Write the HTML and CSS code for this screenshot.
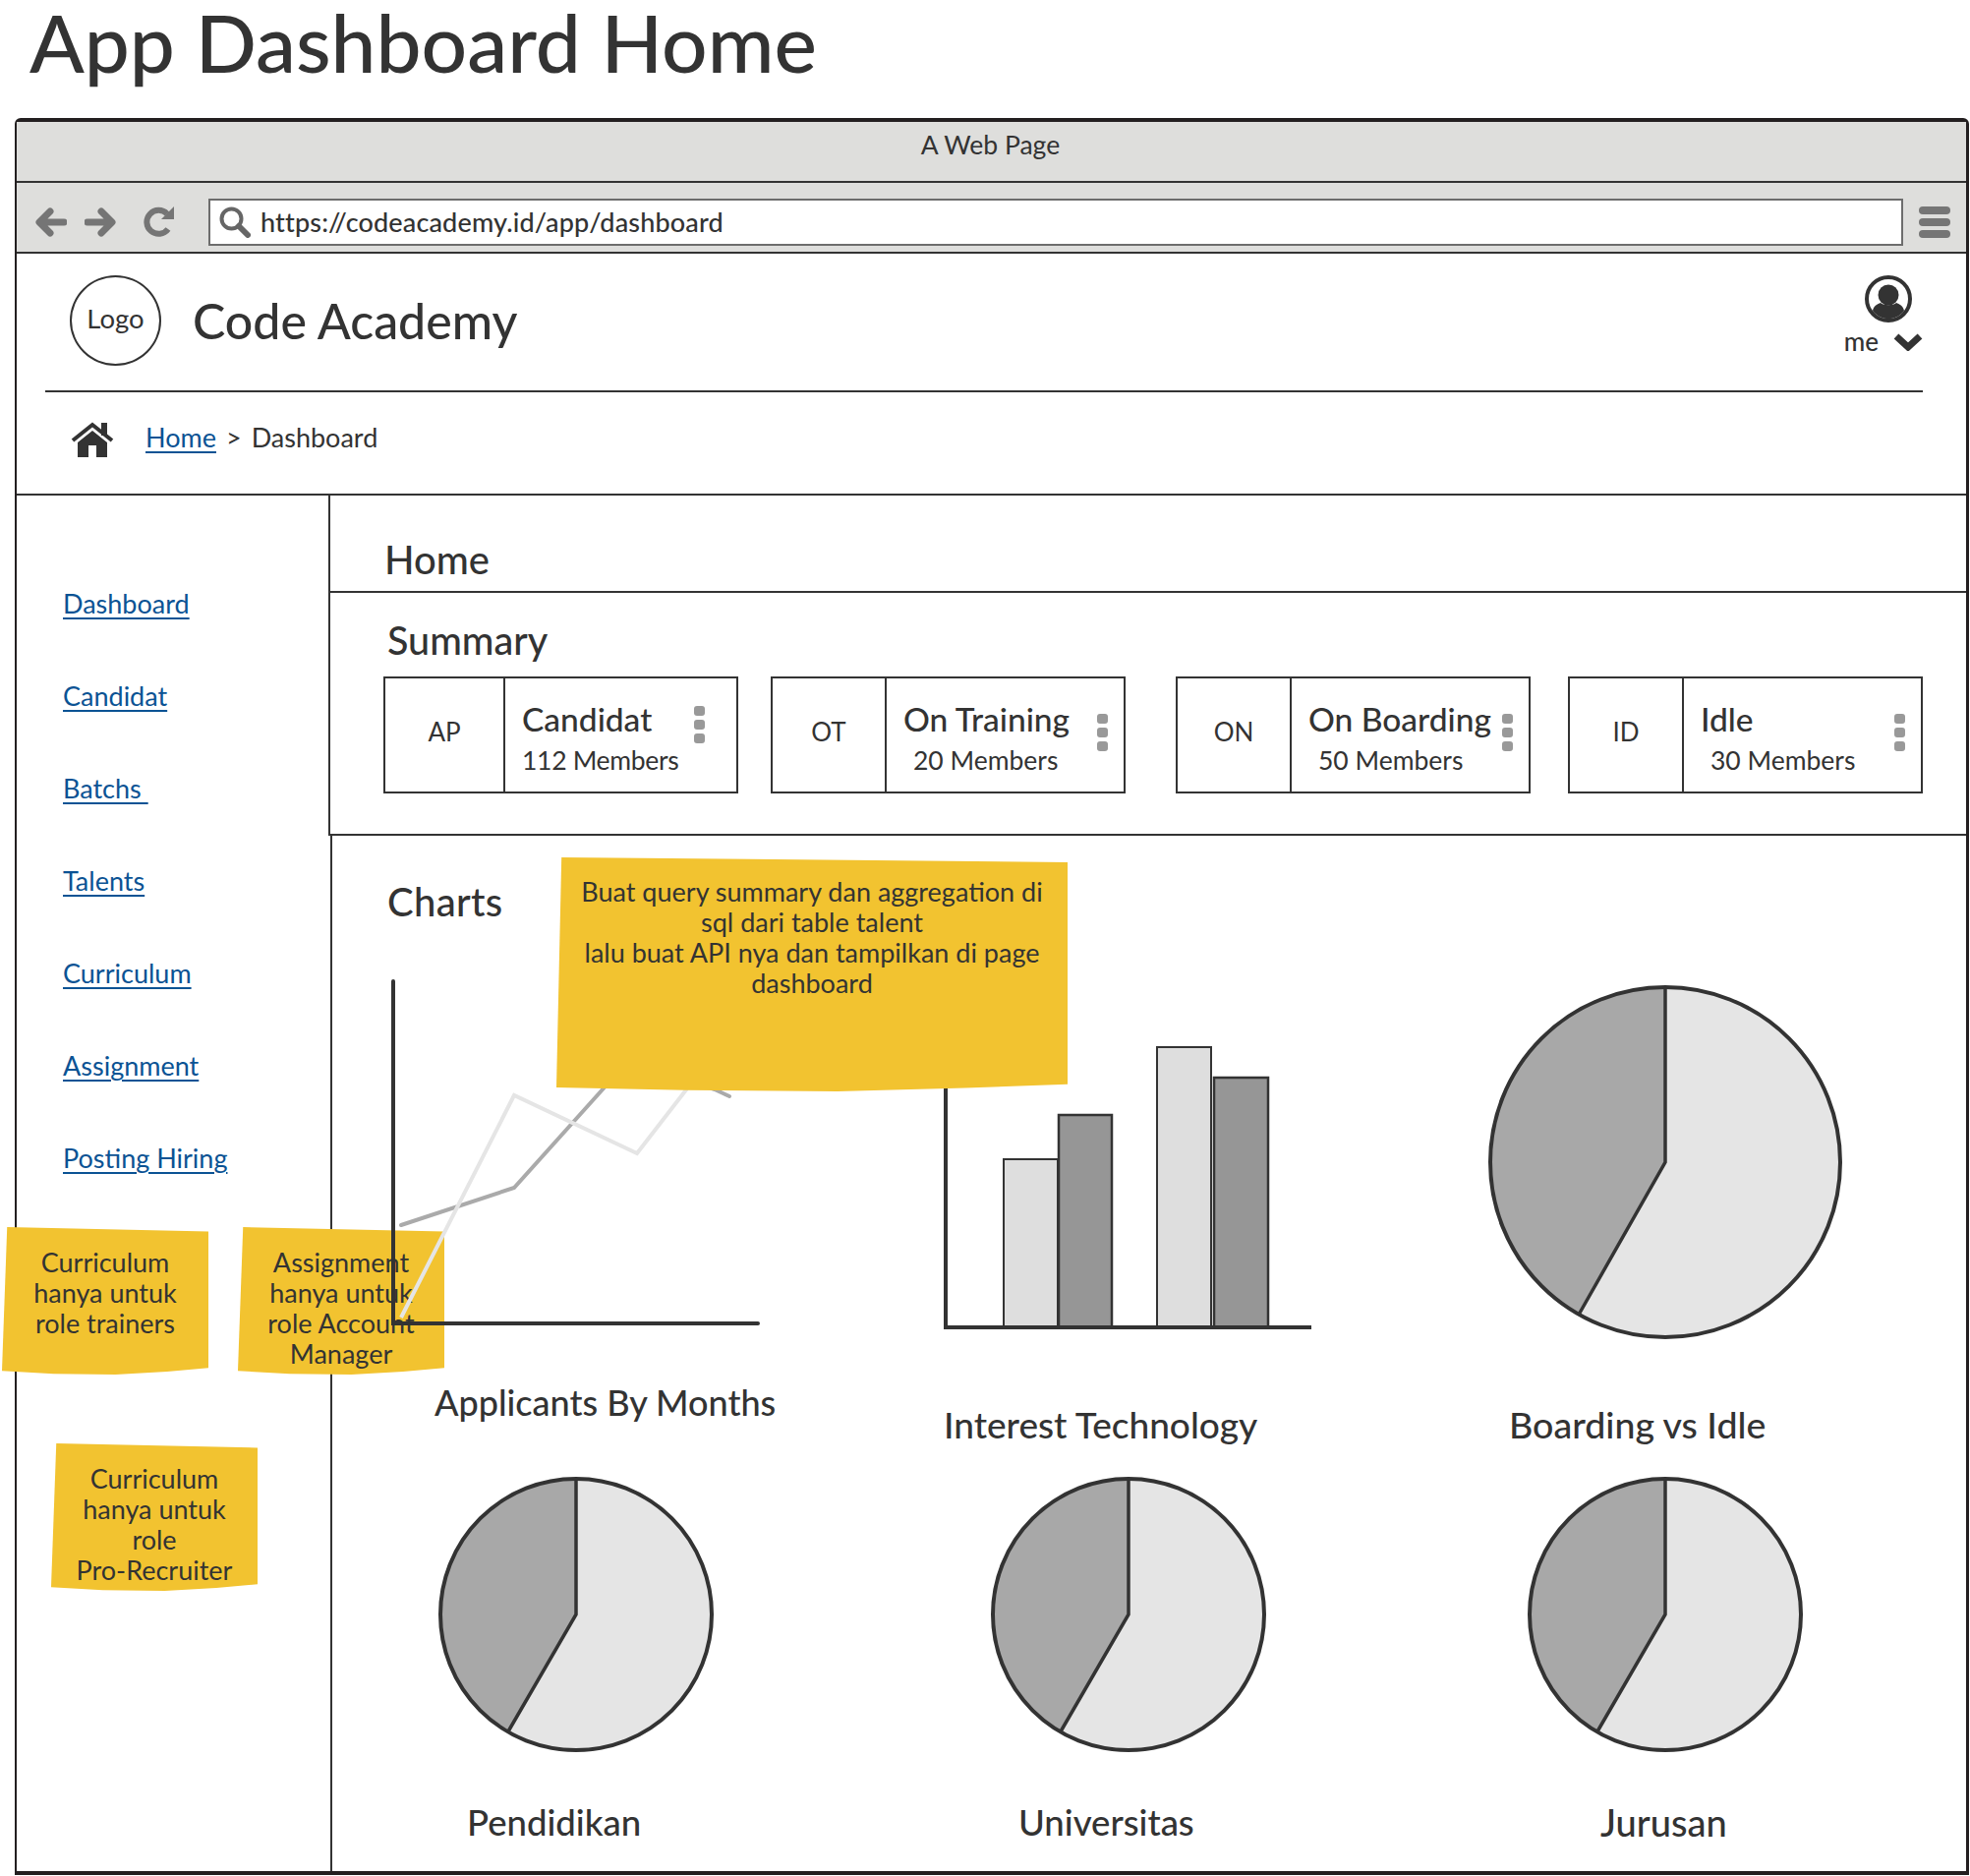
FILE: index.html
```html
<!DOCTYPE html>
<html lang="en">
<head>
<meta charset="utf-8">
<title>App Dashboard Home</title>
<link rel="stylesheet" href="styles.css">
</head>
<body>
<h1 class="page-title">App Dashboard Home</h1>
<div class="window">
  <div class="titlebar">A Web Page</div>
  <div class="toolbar">
    <svg class="tool-icon" width="32" height="32" viewBox="0 0 32 32"><path d="M29 16H5M15 5 4 16l11 11" fill="none" stroke="#757575" stroke-width="7" stroke-linecap="round" stroke-linejoin="round"/></svg>
    <svg class="tool-icon" width="32" height="32" viewBox="0 0 32 32"><path d="M3 16h24M17 5l11 11-11 11" fill="none" stroke="#757575" stroke-width="7" stroke-linecap="round" stroke-linejoin="round"/></svg>
    <svg class="tool-icon reload" width="32" height="32" viewBox="0 0 32 32"><path d="M25 23A12 12 0 1 1 24 7.5" fill="none" stroke="#757575" stroke-width="6"/><path d="M18 13h13V0z" fill="#757575"/></svg>
    <div class="urlbar">
      <svg class="search" width="32" height="32" viewBox="0 0 32 32"><circle cx="12.500" cy="12.500" r="10" fill="none" stroke="#666" stroke-width="4"/><path d="m20 20 9 9" stroke="#666" stroke-width="6" stroke-linecap="round"/></svg>
      <span class="url">https://codeacademy.id/app/dashboard</span>
    </div>
    <div class="hamburger"><i></i><i></i><i></i></div>
  </div>
  <header class="app-header">
    <div class="logo">Logo</div>
    <div class="brand">Code Academy</div>
    <div class="user">
      <svg class="avatar" width="48" height="48" viewBox="0 0 48 48"><circle cx="24" cy="24" r="22" fill="#fff" stroke="#333" stroke-width="4"/><circle cx="24" cy="20" r="10.500" fill="#333"/><path d="M8 36c1-5 5-7 8-8 3 3 13 3 16 0 3 1 7 3 8 8-8 11-24 11-32 0z" fill="#333"/></svg>
      <div class="user-row">
        <span class="me">me</span>
        <svg class="chevron" width="30" height="20" viewBox="0 0 30 20"><path d="m3 5 12 11L27 5" fill="none" stroke="#333" stroke-width="7"/></svg>
      </div>
    </div>
  </header>
  <nav class="crumbs">
    <svg class="home-icon" width="44" height="36" viewBox="0 0 44 36"><path d="M7 21 22 9l15 12v15H26V24h-8v12H7z" fill="#333"/><path d="M2 19 22 3l20 16" fill="none" stroke="#333" stroke-width="4"/><path d="M31 1h6v13h-6z" fill="#333"/></svg>
    <a class="link crumb-home" href="#">Home</a>
    <span class="crumb-sep">&gt;</span>
    <span class="crumb-current">Dashboard</span>
  </nav>
  <div class="content">
    <aside class="sidebar">
      <a class="link nav-link" href="#">Dashboard</a>
      <a class="link nav-link" href="#">Candidat</a>
      <a class="link nav-link" href="#">Batchs&nbsp;</a>
      <a class="link nav-link" href="#">Talents</a>
      <a class="link nav-link" href="#">Curriculum</a>
      <a class="link nav-link" href="#">Assignment</a>
      <a class="link nav-link" href="#">Posting Hiring</a>
    </aside>
    <main class="main">
      <section class="home"><h2 class="section-title">Home</h2></section>
      <section class="summary">
        <h2 class="section-title summary-title">Summary</h2>
        <div class="cards">
          <article class="card card-1">
            <div class="card-code code-wide">AP</div>
            <div class="card-body">
              <div class="card-text"><div class="card-name">Candidat</div><div class="card-count flush">112 Members</div></div>
              <div class="kebab kebab-1"><i></i><i></i><i></i></div>
            </div>
          </article>
          <article class="card card-2">
            <div class="card-code">OT</div>
            <div class="card-body">
              <div class="card-text"><div class="card-name">On Training</div><div class="card-count">20 Members</div></div>
              <div class="kebab"><i></i><i></i><i></i></div>
            </div>
          </article>
          <article class="card card-3">
            <div class="card-code">ON</div>
            <div class="card-body">
              <div class="card-text"><div class="card-name">On Boarding</div><div class="card-count">50 Members</div></div>
              <div class="kebab"><i></i><i></i><i></i></div>
            </div>
          </article>
          <article class="card card-4">
            <div class="card-code">ID</div>
            <div class="card-body">
              <div class="card-text"><div class="card-name">Idle</div><div class="card-count">30 Members</div></div>
              <div class="kebab"><i></i><i></i><i></i></div>
            </div>
          </article>
        </div>
      </section>
      <section class="charts">
        <h2 class="section-title charts-title">Charts</h2>
        <div class="chart-grid">
          <figure class="chart">
            <svg class="chart-svg line-svg" width="380" height="354" viewBox="396 996 380 354">
              <path d="M408 1246 523 1208 640 1078 727 1108 742 1115" fill="none" stroke="#aaa" stroke-width="4" stroke-linecap="round"/>
              <path d="M408 1340 523 1114 648 1173 720 1080" fill="none" stroke="#e5e5e5" stroke-width="4"/>
              <path d="M400 998V1346H771" fill="none" stroke="#333" stroke-width="4" stroke-linecap="round"/>
            </svg>
            <figcaption class="chart-label label-line">Applicants By Months</figcaption>
          </figure>
          <figure class="chart">
            <svg class="chart-svg bar-svg" width="380" height="354" viewBox="958 1000 380 354">
              <path d="M1021 1179h55v171h-55z" fill="#dedede" stroke="#333" stroke-width="2"/>
              <path d="M1077 1134h54v216h-54z" fill="#969696" stroke="#333" stroke-width="2.500"/>
              <path d="M1177 1065h55v285h-55z" fill="#dedede" stroke="#333" stroke-width="2"/>
              <path d="M1235 1096h55v254h-55z" fill="#969696" stroke="#333" stroke-width="2.500"/>
              <path d="M962 1060V1350H1334" fill="none" stroke="#333" stroke-width="4"/>
            </svg>
            <figcaption class="chart-label label-bar">Interest Technology</figcaption>
          </figure>
          <figure class="chart">
            <svg class="pie-big" width="364" height="364" viewBox="-182 -182 364 364">
              <circle r="178" fill="#e5e5e5"/>
              <path d="M0 0V-178A178 178 0 0 0 -88 155z" fill="#a8a8a8"/>
              <path d="M0-178V0L-88 155" fill="none" stroke="#333" stroke-width="3.500"/>
              <circle r="178" fill="none" stroke="#333" stroke-width="4"/>
            </svg>
            <figcaption class="chart-label label-pie">Boarding vs Idle</figcaption>
          </figure>
          <figure class="chart">
            <svg class="pie-small ps-1" width="284" height="284" viewBox="-142 -142 284 284">
              <circle r="138" fill="#e5e5e5"/>
              <path d="M0 0V-138A138 138 0 0 0 -69 119z" fill="#a8a8a8"/>
              <path d="M0-138V0L-69 119" fill="none" stroke="#333" stroke-width="3.500"/>
              <circle r="138" fill="none" stroke="#333" stroke-width="4"/>
            </svg>
            <figcaption class="chart-label small-label sl-1">Pendidikan</figcaption>
          </figure>
          <figure class="chart">
            <svg class="pie-small ps-2" width="284" height="284" viewBox="-142 -142 284 284">
              <circle r="138" fill="#e5e5e5"/>
              <path d="M0 0V-138A138 138 0 0 0 -69 119z" fill="#a8a8a8"/>
              <path d="M0-138V0L-69 119" fill="none" stroke="#333" stroke-width="3.500"/>
              <circle r="138" fill="none" stroke="#333" stroke-width="4"/>
            </svg>
            <figcaption class="chart-label small-label sl-2">Universitas</figcaption>
          </figure>
          <figure class="chart">
            <svg class="pie-small ps-3" width="284" height="284" viewBox="-142 -142 284 284">
              <circle r="138" fill="#e5e5e5"/>
              <path d="M0 0V-138A138 138 0 0 0 -69 119z" fill="#a8a8a8"/>
              <path d="M0-138V0L-69 119" fill="none" stroke="#333" stroke-width="3.500"/>
              <circle r="138" fill="none" stroke="#333" stroke-width="4"/>
            </svg>
            <figcaption class="chart-label small-label sl-3">Jurusan</figcaption>
          </figure>
        </div>
      </section>
    </main>
  </div>
</div>
<div class="sticky sticky-query">Buat query summary dan aggregation di<br>sql dari table talent<br>lalu buat API nya dan tampilkan di page<br>dashboard</div>
<div class="sticky sticky-trainers">Curriculum<br>hanya untuk<br>role trainers</div>
<div class="sticky sticky-account">Assignment<br>hanya untuk<br>role Account<br>Manager</div>
<div class="sticky sticky-recruiter">Curriculum<br>hanya untuk<br>role<br>Pro-Recruiter</div>
</body>
</html>
```
FILE: styles.css
```css
* { box-sizing: border-box; }
html, body { margin: 0; padding: 0; }
body {
  position: relative;
  width: 2004px;
  height: 1908px;
  background: #fff;
  color: #333;
  font-family: "Lato", "Noto Sans", sans-serif;
}
.page-title {
  margin: 0;
  height: 120px;
  padding: 0 0 0 30px;
  font-size: 82px;
  line-height: 84px;
  font-weight: 500;
}
.window {
  width: 1988px;
  height: 1787px;
  margin-left: 15px;
  border-style: solid;
  border-color: #231f20;
  border-width: 4px 3px 4px 2px;
  border-radius: 6px 6px 0 0;
  display: flex;
  flex-direction: column;
}
.titlebar {
  height: 62px;
  background: #dededc;
  border-bottom: 2px solid #333;
  text-align: center;
  font-size: 26.500px;
  line-height: 46px;
  padding-right: 2px;
}
.toolbar {
  height: 72px;
  background: #dededc;
  border-bottom: 2px solid #333;
  display: flex;
  align-items: center;
  padding: 9px 16px 0 19px;
}
.tool-icon { margin-right: 18px; flex: none; }
.reload { margin-left: 10px; margin-right: 34px; }
.urlbar {
  width: 1725px;
  height: 48px;
  background: #fff;
  border: 2px solid #6d6d6d;
  display: flex;
  align-items: center;
  padding-left: 9px;
}
.search { flex: none; }
.url { margin-left: 10px; font-size: 27px; letter-spacing: 0.150px; font-weight: 500; }
.hamburger { margin-left: 16px; display: flex; flex-direction: column; gap: 4px; }
.hamburger i { display: block; width: 32px; height: 8px; border-radius: 4px; background: #757575; }
.app-header {
  height: 141px;
  margin: 0 44px 0 29px;
  border-bottom: 2px solid #333;
  display: flex;
  align-items: flex-start;
}
.logo {
  width: 93px;
  height: 92px;
  margin: 22px 0 0 25px;
  border: 2px solid #333;
  border-radius: 50%;
  text-align: center;
  font-size: 27.500px;
  line-height: 84px;
}
.brand { margin: 39px 0 0 32px; font-size: 50px; line-height: 58px; font-weight: 500; }
.user { margin-left: auto; margin-right: 0; margin-top: 22px; display: flex; flex-direction: column; align-items: center; }
.avatar { margin-left: 10px; }
.user-row { display: flex; align-items: flex-start; gap: 15px; margin-top: 2px; }
.chevron { margin-top: 7px; }
.me { font-size: 26px; line-height: 34px; font-weight: 500; }
.crumbs {
  height: 105px;
  border-bottom: 2px solid #333;
  display: flex;
  align-items: center;
  padding: 0 0 12px 55px;
  font-size: 27px;
}
.home-icon { margin: 5px 32px 0 0; }
.link { color: #0b5394; text-decoration: underline; text-underline-offset: 4px; }
.crumb-sep { margin: 0 10px; }
.content { flex: 1; display: flex; min-height: 0; }
.sidebar {
  width: 319px;
  flex: none;
  display: flex;
  flex-direction: column;
  align-items: flex-start;
  gap: 60px;
  padding: 93px 0 0 47px;
}
.nav-link { font-size: 27px; line-height: 34px; }
.main { flex: 1; min-width: 0; display: flex; flex-direction: column; }
.home {
  height: 99px;
  margin-left: -2px;
  border-left: 2px solid #333;
  border-bottom: 2px solid #333;
  padding: 43px 0 0 55px;
}
.section-title { margin: 0; font-size: 40px; line-height: 44px; font-weight: 500; }
.summary {
  height: 247px;
  margin-left: -2px;
  border-left: 2px solid #333;
  border-bottom: 2px solid #333;
  padding: 26px 0 0 54px;
}
.summary-title { margin-left: 4px; font-size: 39.500px; }
.cards { display: flex; margin-top: 15px; }
.card {
  width: 361px;
  height: 119px;
  border: 2.500px solid #333;
  display: flex;
  flex: none;
}
.card-2 { margin-left: 33px; }
.card-3 { margin-left: 51px; }
.card-4 { margin-left: 38px; }
.card-code {
  width: 116px;
  border-right: 2px solid #333;
  flex: none;
  text-align: center;
  font-size: 26px;
  line-height: 108px;
}
.code-wide { width: 122px; }
.card-body { flex: 1; display: flex; justify-content: space-between; padding: 21px 16px 0 17px; }
.card-name { font-size: 33.500px; line-height: 40px; font-weight: 500; white-space: nowrap; }
.card-count { font-size: 26.500px; line-height: 36px; margin-top: 4px; margin-left: 10px; white-space: nowrap; }
.card-count.flush { margin-left: 0; letter-spacing: -0.300px; }
.kebab { display: flex; flex-direction: column; gap: 4px; margin-top: 15px; }
.kebab-1 { margin-top: 7px; margin-right: 16px; }
.kebab i { display: block; width: 11px; height: 10px; border-radius: 3px; background: #999; }
.charts { flex: 1; border-left: 2px solid #333; padding-top: 45px; min-height: 0; }
.charts-title { margin: 0 0 61px 56px; letter-spacing: 0.300px; }
.chart-grid {
  display: grid;
  grid-template-columns: 611px 563px 1fr;
  grid-template-rows: 500px auto;
}
.chart { margin: 0; min-width: 0; }
.chart-svg, .pie-big, .pie-small { display: block; position: relative; z-index: 2; }
.line-svg { margin: -4px 0 0 58px; }
.bar-svg { margin-left: 9px; }
.chart-label { font-size: 36px; line-height: 44px; font-weight: 500; white-space: nowrap; }
.label-line { margin: 54px 0 0 104px; }
.label-bar { margin: 73px 0 0 11px; font-size: 37px; }
.label-pie { margin: 63px 0 0 23px; font-size: 37.500px; }
.ps-1 { margin-left: 106px; }
.ps-2 { margin-left: 57px; }
.ps-3 { margin-left: 40px; }
.small-label { margin-top: 47px; }
.sl-1 { margin-left: 137px; font-size: 36.500px; }
.sl-2 { margin-left: 87px; font-size: 36.500px; }
.sl-3 { margin-left: 116px; font-size: 38px; }
.sticky {
  position: absolute;
  background: #f2c330;
  color: #333;
  text-align: center;
  font-size: 27px;
  line-height: 31px;
  clip-path: polygon(2.500% 0, 100% 3%, 100% 95.500%, 80% 98%, 55% 100%, 25% 99.500%, 0 97.500%);
}
.sticky-query {
  left: 566px;
  top: 872px;
  width: 520px;
  height: 238px;
  z-index: 3;
  padding-top: 19px;
  clip-path: polygon(1% 0, 100% 2.100%, 100% 97%, 80% 98.500%, 55% 100%, 25% 99.500%, 0 98.300%);
}
.sticky-trainers { left: 2px; top: 1248px; width: 210px; height: 150px; z-index: 1; padding-top: 20px; }
.sticky-account { left: 242px; top: 1248px; width: 210px; height: 150px; z-index: 1; padding-top: 20px; }
.sticky-recruiter { left: 52px; top: 1468px; width: 210px; height: 150px; z-index: 1; padding-top: 20px; }
```
